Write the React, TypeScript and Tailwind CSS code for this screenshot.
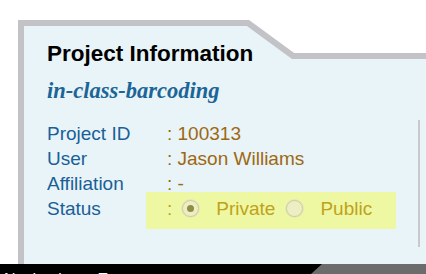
export default function App() {
  const sans = { fontFamily: '"Liberation Sans", Arial, Helvetica, sans-serif' };
  return (
    <div className="w-[426px] h-[274px] overflow-hidden bg-white flex flex-col" style={sans}>
      <div className="relative ml-[18px] mt-[20px] h-[244px] w-[408px] shrink-0">
        <svg className="absolute inset-0" width="408" height="244">
          <polygon points="0,0 231,0 276,33 408,33 408,244 0,244" fill="#e8f4f7" />
          <polyline
            points="3,244 3,3 230,3 275,36 408,36"
            fill="none"
            stroke="#c3c3c7"
            strokeWidth="6"
            strokeLinejoin="miter"
          />
        </svg>
        <div className="relative pl-[29px] pt-[21px]">
          <h1 className="text-[22.5px] leading-[26px] font-bold text-black">Project Information</h1>
          <h2
            className="mt-[11px] text-[22.5px] leading-[26px] font-bold italic text-[#1b6597]"
            style={{ fontFamily: '"Liberation Serif", "Times New Roman", serif' }}
          >
            in-class-barcoding
          </h2>
          <div className="mt-[16px] pt-[1px] h-[127px] w-[373px] border-r-2 border-[#c9c9cd] text-[19px] leading-[25px]">
            <div className="flex">
              <span className="w-[120px] text-[#1a5f98]">Project ID</span>
              <span className="text-[#9e6812]">: 100313</span>
            </div>
            <div className="flex">
              <span className="w-[120px] text-[#1a5f98]">User</span>
              <span className="text-[#9e6812]">: Jason Williams</span>
            </div>
            <div className="flex">
              <span className="w-[120px] text-[#1a5f98]">Affiliation</span>
              <span className="text-[#9e6812]">: -</span>
            </div>
            <div className="flex -mt-[4px]">
              <span className="w-[99px] pt-[4px] text-[#1a5f98]">Status</span>
              <div className="w-[250px] h-[37px] pt-[4px] pl-[21px] bg-[#eef8a2] flex items-start text-[#bfa21c]">
                <span>:</span>
                <span className="ml-[10px] mt-[4px] w-[17px] h-[17px] rounded-full border border-[#cdce98] bg-[#eeeec4] flex items-center justify-center shadow-[0_0_0_1px_#e4e9b4]">
                  <span className="w-[7px] h-[7px] rounded-full bg-[#8e8e44]" />
                </span>
                <span className="ml-[17px]">Private</span>
                <span className="ml-[11px] mt-[4px] w-[17px] h-[17px] rounded-full border border-[#cdce98] bg-[#eeeec4] shadow-[0_0_0_1px_#e4e9b4]" />
                <span className="ml-[17px]">Public</span>
              </div>
            </div>
          </div>
        </div>
      </div>
      <div className="relative h-[10px] shrink-0 bg-[#6c6c6c] overflow-hidden">
        <div className="h-full w-[322px] bg-black [clip-path:polygon(0_0,100%_0,calc(100%-11px)_100%,0_100%)] pl-[4px] pt-[8px] text-[16px] leading-none text-white whitespace-nowrap">
          Navigation&nbsp;&nbsp;&nbsp;&nbsp;Export
        </div>
      </div>
    </div>
  );
}
